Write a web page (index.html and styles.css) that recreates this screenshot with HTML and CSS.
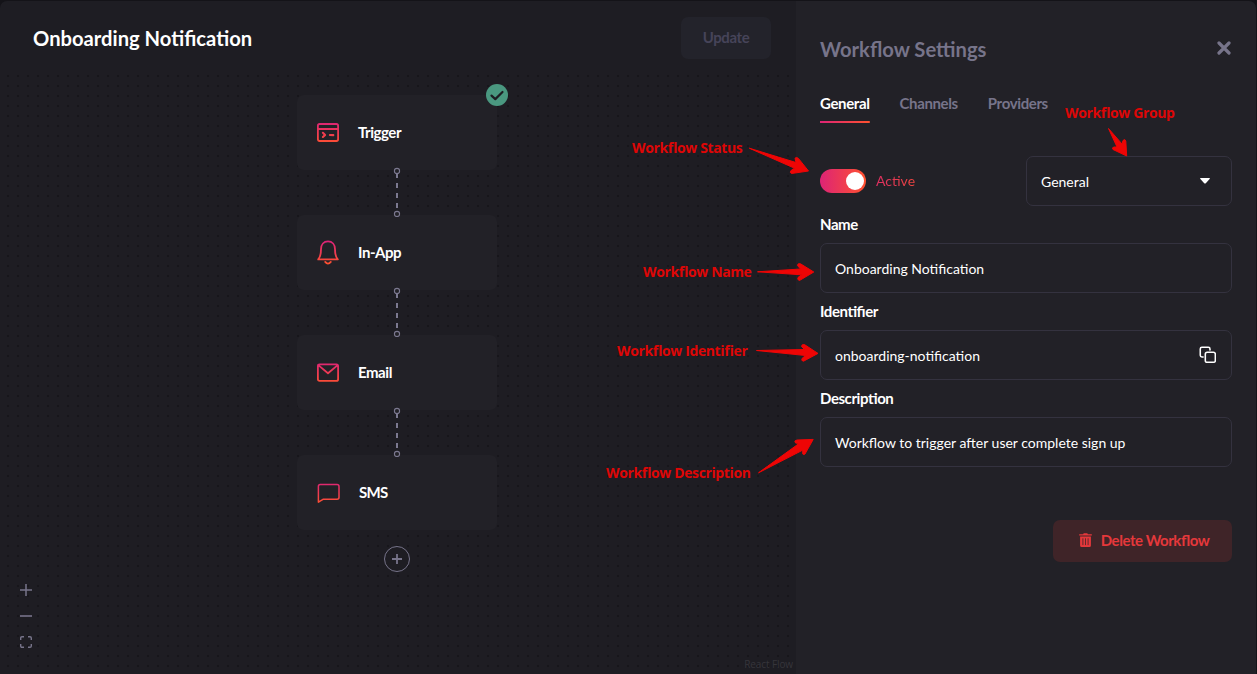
FILE: index.html
```html
<!DOCTYPE html>
<html lang="en">
<head>
<meta charset="utf-8">
<title>Workflow Editor</title>
<link rel="stylesheet" href="styles.css">
</head>
<body>
<svg class="defs" width="0" height="0">
  <defs>
    <linearGradient id="grad" gradientUnits="userSpaceOnUse" x1="0" y1="2" x2="0" y2="24"><stop offset="0" stop-color="#dd2476"/><stop offset="1" stop-color="#ff512f"/></linearGradient>
  </defs>
</svg>
<div class="app">
  <main class="editor">
    <header class="topbar">
      <h1 class="title">Onboarding Notification</h1>
      <button class="update">Update</button>
    </header>
    <section class="canvas">
      <div class="node node-trigger">
        <svg class="node-icon" viewBox="0 0 26 26"><g fill="none" stroke="url(#grad)" stroke-width="1.8" stroke-linejoin="round" stroke-linecap="round"><path d="M4.6 4H21.4Q23.1 4 23.1 5.7V19.3Q23.1 21 21.4 21H4.6Q2.9 21 2.9 19.3V5.7Q2.9 4 4.6 4ZM2.9 9H23.1"/><path d="M7.9 12.8L10.1 14.9L7.9 17M14.9 15L18.3 15.1" stroke-width="2.1"/></g></svg>
        <span class="node-label">Trigger</span>
        <svg class="check" viewBox="0 0 22 22"><circle cx="11" cy="11" r="11" fill="#4a9880"/><path d="M5.5 11.6L9.3 15.1L16.5 8" fill="none" stroke="#1e1e23" stroke-width="2.2" stroke-linecap="round" stroke-linejoin="round"/></svg>
      </div>
      <div class="node node-inapp">
        <svg class="node-icon" viewBox="0 0 26 26"><g fill="none" stroke="url(#grad)" stroke-width="1.8" stroke-linejoin="round" stroke-linecap="round"><path d="M3.2 19.4C5.4 17 6 14.6 6 9.2C6 4.4 8.8 1.4 13 1.4S20 4.4 20 9.2C20 14.6 20.6 17 22.8 19.4ZM10.2 21.9Q13 25.5 15.8 21.9"/></g></svg>
        <span class="node-label">In-App</span>
      </div>
      <div class="node node-email">
        <svg class="node-icon" viewBox="0 0 26 26"><g fill="none" stroke="url(#grad)" stroke-width="1.8" stroke-linejoin="round"><path d="M4.6 4.3H21.4Q23.1 4.3 23.1 6V19.2Q23.1 20.9 21.4 20.9H4.6Q2.9 20.9 2.9 19.2V6Q2.9 4.3 4.6 4.3ZM3.3 5.1L13 13.2L22.7 5.1"/></g></svg>
        <span class="node-label">Email</span>
      </div>
      <div class="node node-sms">
        <svg class="node-icon" viewBox="0 0 26 26"><g fill="none" stroke="url(#grad)" stroke-width="1.5" stroke-linejoin="round"><path d="M5.2 4.4H22Q24 4.4 24 6.4V17.3Q24 19.3 22 19.3H8L3.4 22.2V6.4Q3.4 4.4 5.2 4.4Z"/></g></svg>
        <span class="node-label sms-label">SMS</span>
      </div>
      <svg class="edge edge-1" viewBox="0 0 8 50"><path d="M4 6V44" stroke="#7c7990" stroke-width="2" stroke-dasharray="5"/><g fill="#222127" stroke="#7c7990" stroke-width="1.1"><circle cx="4" cy="4" r="2.6"/><circle cx="4" cy="47" r="2.6"/></g></svg>
      <svg class="edge edge-2" viewBox="0 0 8 50"><path d="M4 6V44" stroke="#7c7990" stroke-width="2" stroke-dasharray="5"/><g fill="#222127" stroke="#7c7990" stroke-width="1.1"><circle cx="4" cy="4" r="2.6"/><circle cx="4" cy="47" r="2.6"/></g></svg>
      <svg class="edge edge-3" viewBox="0 0 8 50"><path d="M4 6V44" stroke="#7c7990" stroke-width="2" stroke-dasharray="5"/><g fill="#222127" stroke="#7c7990" stroke-width="1.1"><circle cx="4" cy="4" r="2.6"/><circle cx="4" cy="47" r="2.6"/></g></svg>
      <svg class="add" viewBox="0 0 26 26"><circle cx="13" cy="13" r="12.5" fill="#1e1d23" stroke="#77748a"/><path d="M13 8V18M8 13H18" stroke="#77748a" stroke-width="1.8"/></svg>
      <div class="controls">
        <svg viewBox="0 0 12 12"><path d="M6 0V12M0 6H12" stroke="#77748a" stroke-width="1.5"/></svg>
        <svg viewBox="0 0 12 12"><path d="M0 6H12" stroke="#77748a" stroke-width="1.6"/></svg>
        <svg viewBox="0 0 12 12"><path d="M.7 4V2Q.7.7 2 .7H4M8 .7H10Q11.3.7 11.3 2V4M11.3 8V10Q11.3 11.3 10 11.3H8M4 11.3H2Q.7 11.3.7 10V8" fill="none" stroke="#77748a" stroke-width="1.4"/></svg>
      </div>
      <span class="credit">React Flow</span>
    </section>
  </main>
  <aside class="panel">
    <div class="panel-head">
      <h2 class="panel-title">Workflow Settings</h2>
      <svg class="close" viewBox="0 0 14 14"><path d="M2 2L12 12M12 2L2 12" stroke="#77748a" stroke-width="3.2" stroke-linecap="round"/></svg>
    </div>
    <nav class="tabs">
      <span class="tab active">General</span>
      <span class="tab">Channels</span>
      <span class="tab">Providers</span>
    </nav>
    <div class="status-row">
      <span class="switch"><span class="knob"></span></span>
      <span class="status">Active</span>
      <div class="field select"><span>General</span><svg class="caret" viewBox="0 0 12 8"><path d="M1.8 1H10.2Q11.6 1 10.6 2.1L6.8 6.2Q6 7 5.2 6.2L1.4 2.1Q.4 1 1.8 1Z" fill="#fff"/></svg></div>
    </div>
    <label class="label">Name</label>
    <div class="field">Onboarding Notification</div>
    <label class="label">Identifier</label>
    <div class="field"><span>onboarding-notification</span><svg class="copy" viewBox="0 0 18 18"><g fill="none" stroke="#fff" stroke-width="1.6" stroke-linejoin="round" stroke-linecap="round"><rect x="6.5" y="6.5" width="10.3" height="10.3" rx="2"/><path d="M4.2 11.3H3Q1.3 11.3 1.3 9.6V3Q1.3 1.3 3 1.3H9.6Q11.3 1.3 11.3 3V4"/></g></svg></div>
    <label class="label">Description</label>
    <div class="field">Workflow to trigger after user complete sign up</div>
    <button class="delete"><svg class="trash" viewBox="0 0 13 14"><path d="M.2 1.2H4L4.8.2H8.2L9 1.2H12.8V2.6H.2ZM1.1 3.5H11.9V12.4Q11.9 14 10.4 14H2.6Q1.1 14 1.1 12.4Z" fill="#e5383b"/><path d="M3.9 5.3V12.1M6.5 5.3V12.1M9.1 5.3V12.1" stroke="#3f2428" stroke-width=".8"/></svg>Delete Workflow</button>
  </aside>
</div>
<div class="notes">
  <span class="note n-status">Workflow Status</span>
  <span class="note n-group">Workflow Group</span>
  <span class="note n-name">Workflow Name</span>
  <span class="note n-id">Workflow Identifier</span>
  <span class="note n-desc">Workflow Description</span>
  <svg class="arrows" viewBox="0 0 1257 674"><g fill="#ee0505" stroke="#ee0505" stroke-linejoin="round" stroke-width="1">
    <path d="M749.3 148.2L796 162.5L795 158.2Q796.5 156.5 798.5 158.5L808.5 171L791.5 173.5Q789 172.5 791.5 170L794.5 168.2Z"/>
    <path d="M1108.5 128.5L1122 144L1123 140.5Q1125 138.5 1125.8 141L1126.7 156L1113 149.5Q1111.5 147.5 1114 147L1117 147Z"/>
    <path d="M757.5 271.8L800.5 269L797.5 265.5Q797.5 263 800.5 263.8L813.8 272L799.5 280.5Q797 280 798 277.5L801.5 274.8Z"/>
    <path d="M756.5 350.5L804.5 349.5L801.5 346.5Q801.5 344 804.5 344.6L818 353.4L803.5 361.2Q801 361 802 358.5L805.5 355.5Z"/>
    <path d="M758.5 472.8L799 443.5L795.5 443Q793.5 440.5 797 440L813.2 439.4L805 454Q802.5 455.5 802.5 452.5L803 450Z"/>
  </g></svg>
</div>
</body>
</html>
```
FILE: styles.css
```css
* { box-sizing: border-box; }
body { margin: 0; width: 1257px; height: 674px; overflow: hidden; background: #141318; font-family: Lato, sans-serif; color: #fff; font-size: 14px; }
.defs { position: absolute; }
.app { display: flex; width: 1256px; height: 674px; padding-top: 1px; }
.editor { width: 796px; display: flex; flex-direction: column; background: #1e1d23; border-top-left-radius: 7px; }
.topbar { height: 74px; flex: none; display: flex; justify-content: space-between; align-items: center; padding: 0 25px 0 33px; }
.title { margin: 0; font-size: 20.2px; line-height: 24px; font-weight: 700; }
.update, .node-label, .tab, .label, .delete { font-family: Lato, sans-serif; font-size: 15px; font-weight: 700; letter-spacing: -0.45px; font-feature-settings: "liga" 1; }
.update { width: 90px; height: 42px; border: 0; border-radius: 7px; background: #23232b; color: #464459; padding: 0 0 2px; letter-spacing: -0.4px; }
.canvas { position: relative; flex: 1; background-image: radial-gradient(circle at 5px 5px, #17161b 0.8px, transparent 1.2px); background-size: 10px 10px; background-position: 3px -4px; }
.node { position: absolute; left: 297px; width: 200px; height: 75px; display: flex; align-items: center; padding-left: 18px; background: #222127; border-radius: 7px; }
.node-trigger { top: 20px; }
.node-inapp { top: 140px; }
.node-email { top: 260px; }
.node-sms { top: 380px; }
.node-icon { width: 26px; height: 26px; }
.node-label { margin-left: 17px; padding-bottom: 1px; }
.sms-label { margin-left: 18px; letter-spacing: -0.7px; }
.check { position: absolute; width: 22px; height: 22px; right: -11px; top: -11px; }
.edge { position: absolute; left: 393px; width: 8px; height: 50px; }
.edge-1 { top: 92px; }
.edge-2 { top: 212px; }
.edge-3 { top: 332px; }
.add { position: absolute; left: 384px; top: 471px; width: 26px; height: 26px; }
.controls { position: absolute; left: 20px; top: 509px; display: grid; gap: 14px; }
.controls svg { display: block; width: 12px; height: 12px; }
.credit { position: absolute; right: 3px; bottom: 3px; font: 10px/13px "Open Sans", sans-serif; letter-spacing: -0.1px; color: #36353b; }
.panel { width: 460px; padding: 0 24px; background: #222127; border-top-right-radius: 7px; display: flex; flex-direction: column; }
.panel-head { display: flex; justify-content: space-between; padding: 35px 1px 0 0; height: 91px; }
.panel-title { margin: 0; font-size: 20.2px; line-height: 26px; font-weight: 700; color: #77748a; }
.close { width: 14px; height: 14px; margin-top: 5px; }
.tabs { display: flex; gap: 30px; height: 31px; }
.tab { height: 31px; line-height: 23px; color: #77748a; letter-spacing: -0.37px; }
.active { color: #fff; background: linear-gradient(90deg, #dd2476, #ff512f) bottom / 100% 2px no-repeat; }
.status-row { display: flex; align-items: center; height: 50px; margin-top: 33px; }
.switch { width: 46px; height: 24px; border-radius: 12px; padding: 3px 2px; display: flex; justify-content: flex-end; background: linear-gradient(90deg, #dd2476, #ff512f); }
.knob { width: 18px; height: 18px; border-radius: 50%; background: #fff; }
.status { margin: -1px 0 0 10px; color: transparent; background: linear-gradient(90deg, #dd2f61, #ee4540); background-clip: text; -webkit-background-clip: text; }
.field { height: 50px; flex: none; display: flex; align-items: center; justify-content: space-between; padding: 0 14px; border: 1px solid #34323f; border-radius: 7px; }
.select { width: 206px; margin-left: auto; padding-right: 20px; }
.caret { width: 12px; height: 8px; }
.copy { width: 17.5px; height: 17.5px; margin-right: 1px; }
.label { height: 37px; flex: none; padding-top: 9px; line-height: 18px; letter-spacing: -0.43px; }
.delete { align-self: flex-end; width: 179px; height: 42px; margin-top: 53px; border: 0; border-radius: 7px; background: #3f2428; color: #e5383b; display: flex; align-items: center; justify-content: center; gap: 9px; padding: 0 0 2px 3px; }
.trash { width: 13px; height: 14px; }
.notes { position: absolute; inset: 0; pointer-events: none; }
.note { position: absolute; white-space: nowrap; color: #de0606; font: 700 14px/18px "Open Sans", sans-serif; letter-spacing: -0.38px; font-feature-settings: "liga" 1; }
.n-status { left: 632px; top: 139px; }
.n-group { left: 1065px; top: 104px; }
.n-name { left: 643px; top: 263px; }
.n-id { left: 617px; top: 342px; }
.n-desc { left: 606px; top: 464px; }
.arrows { position: absolute; left: 0; top: 0; width: 1257px; height: 674px; }
```
